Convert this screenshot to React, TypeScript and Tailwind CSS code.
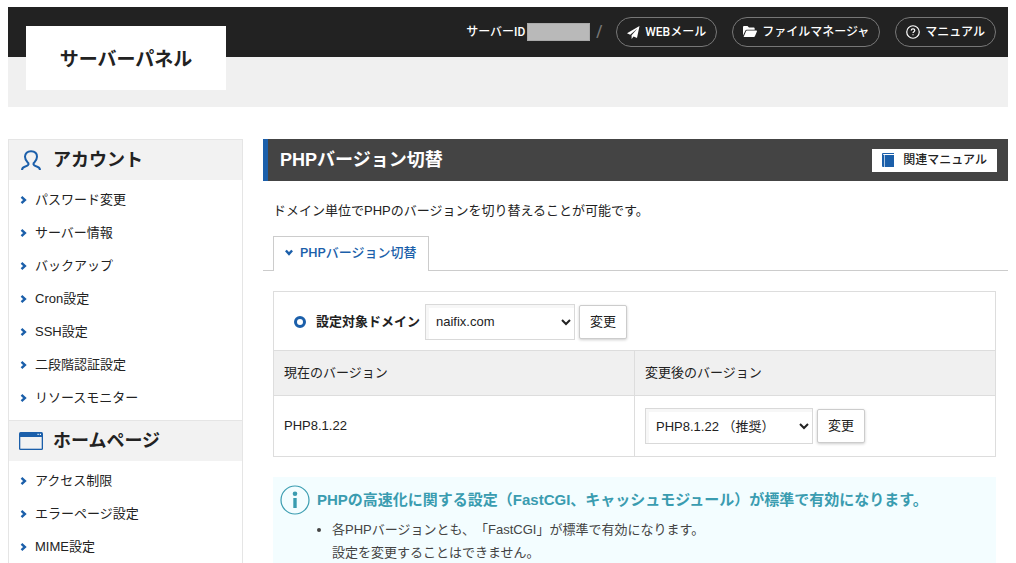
import type { ReactNode } from 'react';

const MENU = [
  {
    title: 'アカウント',
    icon: <UserIcon />,
    items: ['パスワード変更', 'サーバー情報', 'バックアップ', 'Cron設定', 'SSH設定', '二段階認証設定', 'リソースモニター'],
  },
  {
    title: 'ホームページ',
    icon: <WindowIcon />,
    items: ['アクセス制限', 'エラーページ設定', 'MIME設定'],
  },
];

function UserIcon() {
  return (
    <svg width="20" height="21" viewBox="0 0 20 21" fill="none" stroke="#1b5faa" strokeWidth="2">
      <path d="M1 20c.2-2.600 1.500-3 3.300-3.500C6.200 16 8.200 15 7.400 13.200 6 11.800 4 10.400 4 6.800 4 3.300 6.400 1.200 10 1.200s6 2.100 6 5.600c0 3.600-2 5-3.400 6.400-.8 1.800 1.200 2.800 3.100 3.300 1.800.5 3.100.9 3.300 3.500" />
    </svg>
  );
}

function WindowIcon() {
  return (
    <svg width="24" height="18" viewBox="0 0 24 18">
      <rect width="24" height="18" rx="1.500" fill="#1b5faa" />
      <path d="M1.300 5h21.400v11.700H1.300z" fill="#f2f2f2" />
      <path d="M18.500 1.800h1.200V3h-1.200zM20.800 1.800H22V3h-1.200z" fill="#fff" />
    </svg>
  );
}

function BookIcon() {
  return (
    <svg width="12" height="14" viewBox="0 0 12 14">
      <path d="M1 0h11v1H1.500v1H12v12H1a1 1 0 0 1-1-1V1a1 1 0 0 1 1-1z" fill="#1b5faa" />
      <path d="M1.500 1H12v1H1.500z" fill="#fff" />
      <path d="M2.500 2v12" stroke="#cfdff0" strokeWidth=".8" />
    </svg>
  );
}

function PlaneIcon() {
  return (
    <svg width="13" height="13" viewBox="0 0 13 13" fill="#fff">
      <path d="M12.500 0 0 7.300l3.200 1.400L10.500 2.500 4.600 9.300V13l2-2.500 3.400 1.600z" />
    </svg>
  );
}

function FolderIcon() {
  return (
    <svg width="14" height="12" viewBox="0 0 14 12" fill="#fff">
      <path d="M0 9.500V1.200C0 .5.500 0 1.200 0h3.300L6 1.500h4.500c.7 0 1.200.5 1.200 1.200v1H3.800c-.6 0-1.100.3-1.400.8z" />
      <path d="M.6 11 3 5.200c.2-.4.500-.6.900-.6h9.500c.5 0 .7.400.5.800l-2 4.900c-.2.500-.6.700-1.100.7z" />
    </svg>
  );
}

function HelpIcon() {
  return (
    <svg width="14" height="14" viewBox="0 0 15 15" fill="none" stroke="#fff" strokeWidth="1.300">
      <circle cx="7.500" cy="7.500" r="6.700" />
      <path d="M5.600 6c0-1.200.8-1.900 1.900-1.900s1.900.7 1.900 1.700c0 1.300-1.900 1.400-1.900 2.900M7.500 9.800V11" />
    </svg>
  );
}

function InfoIcon() {
  return (
    <svg width="30" height="30" viewBox="0 0 30 30">
      <circle cx="15" cy="15" r="14" fill="none" stroke="#3a9cb0" strokeWidth="1.200" />
      <circle cx="15" cy="8.800" r="2.300" fill="#3a9cb0" />
      <path d="M13.300 13h3.400v10h-3.400z" fill="#3a9cb0" />
    </svg>
  );
}

function Chevron({ down = false }: { down?: boolean }) {
  return (
    <svg
      width="8"
      height="8"
      viewBox="0 0 8 8"
      fill="none"
      stroke="#1b5faa"
      strokeWidth="2.400"
      className={down ? 'rotate-90' : ''}
    >
      <path d="M1.500 .9 4.900 4 1.500 7.100" />
    </svg>
  );
}

function HeaderLink({ icon, children }: { icon: ReactNode; children: ReactNode }) {
  return (
    <a href="#" className="flex h-[30px] items-center gap-[5px] rounded-full border border-[#777] px-[10px] text-white">
      {icon}
      {children}
    </a>
  );
}

function ChangeButton() {
  return (
    <button
      type="button"
      className="h-[34px] w-12 rounded-[2px] border border-[#ccc] bg-white text-[13px] shadow-[0_1px_3px_rgba(0,0,0,0.2)]"
    >
      変更
    </button>
  );
}

const selectClass =
  'h-9 border border-[#d9d9d9] bg-white pl-[6px] text-[13px] shadow-[inset_3px_3px_0_#f7f7f7]';

export default function App() {
  return (
    <div className="h-screen overflow-hidden bg-white px-2 pt-[7px] font-['Liberation_Sans','Noto_Sans_CJK_JP',sans-serif] text-[13px] text-[#222] [text-spacing-trim:space-all]">
      <header className="relative h-[100px] bg-[#f0f0f0]">
        <div className="flex h-[50px] items-center justify-end bg-[#222] pr-3 font-['Roboto','Noto_Sans_CJK_JP',sans-serif] text-[12px] font-medium text-white">
          <span>サーバーID</span>
          <span className="ml-[2px] h-[18px] w-[63px] border border-[#aaa] bg-[#b9b9b9]" />
          <span className="mx-[6px] w-[14px] text-[16px] text-[#777]">/</span>
          <nav className="flex gap-[15px]">
            <HeaderLink icon={<PlaneIcon />}>WEBメール</HeaderLink>
            <HeaderLink icon={<FolderIcon />}>ファイルマネージャ</HeaderLink>
            <HeaderLink icon={<HelpIcon />}>マニュアル</HeaderLink>
          </nav>
        </div>
        {/* Logo plate hangs over both bands */}
        <a
          href="#"
          className="absolute top-[19px] left-[18px] flex h-16 w-[200px] items-center justify-center bg-white font-['Noto_Sans_CJK_JP',sans-serif] text-[19px] font-bold"
        >
          サーバーパネル
        </a>
      </header>

      <div className="mt-8 flex gap-5">
        <aside className="w-[235px] shrink-0 border-x border-[#e5e5e5]">
          {MENU.map((group) => (
            <section key={group.title}>
              <h2 className="flex h-[41px] items-center border-t border-[#e5e5e5] bg-[#f2f2f2] pl-[10px] text-[18px] font-bold">
                <span className="mr-[10px] flex w-6 justify-center">{group.icon}</span>
                {group.title}
              </h2>
              <ul className="pt-[3px] pb-[6px]">
                {group.items.map((item) => (
                  <li key={item}>
                    <a href="#" className="flex h-[33px] items-center gap-[7px] pl-[11px]">
                      <Chevron />
                      {item}
                    </a>
                  </li>
                ))}
              </ul>
            </section>
          ))}
        </aside>

        <main className="min-w-0 flex-1">
          <div className="flex h-[42px] items-center justify-between border-l-[5px] border-[#1b5faa] bg-[#444] pr-[11px] pl-3">
            <h1 className="text-[18px] font-bold text-white">PHPバージョン切替</h1>
            <a href="#" className="flex h-[23px] items-center gap-[9px] bg-white px-[10px] text-[12px] font-medium">
              <BookIcon />
              関連マニュアル
            </a>
          </div>

          <p className="mt-5 px-[10px] leading-5">ドメイン単位でPHPのバージョンを切り替えることが可能です。</p>

          <div className="mt-[15px] flex border-b border-[#ccc] pl-[10px]">
            <a
              href="#"
              className="-mb-px flex h-[35px] items-center gap-[7px] border border-b-0 border-[#ccc] bg-white px-[11px] pb-[2px] font-['Roboto','Noto_Sans_CJK_JP',sans-serif] font-medium text-[#1b5faa]"
            >
              <Chevron down />
              PHPバージョン切替
            </a>
          </div>

          <div className="mt-5 mr-3 ml-[10px]">
            <div className="flex h-[59px] items-center border border-b-0 border-[#ddd] pt-px pl-5">
              <span className="size-3 rounded-full border-[3px] border-[#1b5faa]" />
              <label htmlFor="domain" className="mr-[5px] ml-[10px] font-bold">
                設定対象ドメイン
              </label>
              <select id="domain" className={`${selectClass} mr-1 w-[150px]`}>
                <option>naifix.com</option>
              </select>
              <ChangeButton />
            </div>
            <table className="w-full table-fixed border-collapse text-left">
              <thead>
                <tr className="h-[45px] bg-[#f0f0f0]">
                  <th className="border border-[#ddd] px-[10px] font-normal">現在のバージョン</th>
                  <th className="border border-[#ddd] px-[10px] font-normal">
                    <label htmlFor="version">変更後のバージョン</label>
                  </th>
                </tr>
              </thead>
              <tbody>
                <tr className="h-[61px]">
                  <td className="border border-[#ddd] px-[10px]">PHP8.1.22</td>
                  <td className="border border-[#ddd] px-[10px]">
                    <div className="flex items-center gap-1">
                      <select id="version" className={`${selectClass} w-[168px]`}>
                        <option>PHP8.1.22 （推奨）</option>
                      </select>
                      <ChangeButton />
                    </div>
                  </td>
                </tr>
              </tbody>
            </table>
          </div>

          <section className="mt-5 mr-3 ml-[10px] bg-[#f3fdff] px-[7px] pt-2 pb-10">
            <h2 className="flex items-center gap-[7px] text-[15px] font-bold text-[#3a9cb0]">
              <InfoIcon />
              PHPの高速化に関する設定（FastCGI、キャッシュモジュール）が標準で有効になります。
            </h2>
            <ul className="mt-[3px] list-disc pl-[52px] leading-[23px] text-[#444]">
              <li>
                各PHPバージョンとも、「FastCGI」が標準で有効になります。
                <br />
                設定を変更することはできません。
              </li>
            </ul>
          </section>
        </main>
      </div>
    </div>
  );
}
